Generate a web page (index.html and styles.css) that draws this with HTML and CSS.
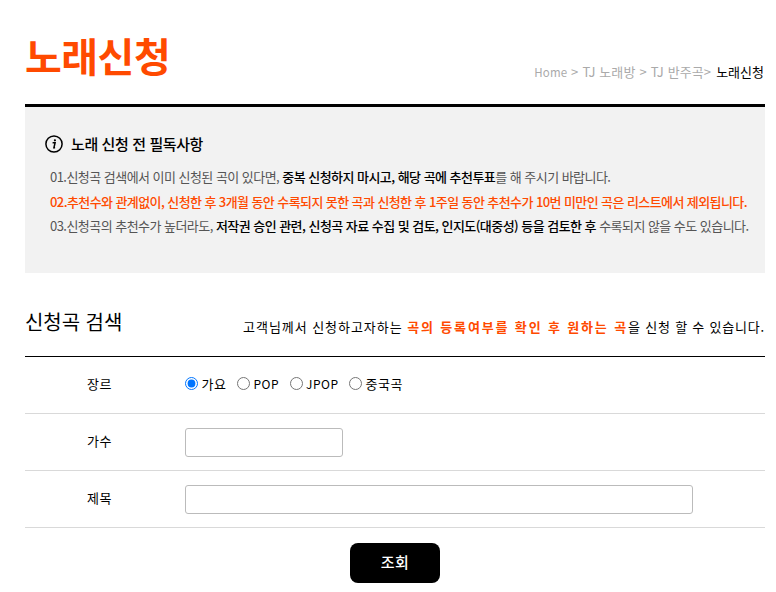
FILE: index.html
```html
<!DOCTYPE html>
<html lang="ko">
<head>
<meta charset="utf-8">
<title>노래신청</title>
<link rel="stylesheet" href="styles.css">
</head>
<body>
<main class="page">
  <header class="head">
    <h1 class="title">노래신청</h1>
    <nav class="crumbs"><span class="home">Home</span><i>&gt;</i><span>TJ 노래방</span><i>&gt;</i><span>TJ 반주곡</span><i class="tight">&gt;</i><b>노래신청</b></nav>
  </header>
  <section class="notice">
    <h2 class="notice-title">
      <svg class="info" width="18" height="18" viewBox="0 0 18 18"><circle cx="9" cy="9" r="8.1" fill="none" stroke="#000" stroke-width="1.5"/><circle cx="9.9" cy="5.3" r="1.1"/><path d="M7.6 7.7h2.5l-1.2 5h1.2" fill="none" stroke="#000" stroke-width="1.5"/></svg>
      노래 신청 전 필독사항
    </h2>
    <p>01.신청곡 검색에서 이미 신청된 곡이 있다면, <strong>중복 신청하지 마시고, 해당 곡에 추천투표</strong>를 해 주시기 바랍니다.</p>
    <p class="warn">02.추천수와 관계없이, 신청한 후 3개월 동안 수록되지 못한 곡과 신청한 후 1주일 동안 추천수가 10번 미만인 곡은 리스트에서 제외됩니다.</p>
    <p>03.신청곡의 추천수가 높더라도, <strong>저작권 승인 관련, 신청곡 자료 수집 및 검토, 인지도(대중성) 등을 검토한 후</strong> 수록되지 않을 수도 있습니다.</p>
  </section>
  <div class="search-head">
    <h2 class="search-title">신청곡 검색</h2>
    <p class="search-desc"><span class="lead">고객님께서 신청하고자하는 </span><em>곡의 등록여부를 확인 후 원하는 곡</em>을 신청 할 수 있습니다.</p>
  </div>
  <form class="form">
    <div class="row">
      <span class="label">장르</span>
      <div class="radios">
        <label><input type="radio" name="g" checked>가요</label>
        <label class="latin"><input type="radio" name="g">POP</label>
        <label class="latin"><input type="radio" name="g">JPOP</label>
        <label><input type="radio" name="g">중국곡</label>
      </div>
    </div>
    <div class="row">
      <span class="label">가수</span>
      <input class="field short" type="text">
    </div>
    <div class="row">
      <span class="label">제목</span>
      <input class="field long" type="text">
    </div>
    <div class="actions"><button class="btn" type="button">조회</button></div>
  </form>
</main>
</body>
</html>
```
FILE: styles.css
```css
* { box-sizing: border-box; }
html, body { margin: 0; padding: 0; background: #fff; }
body { font-family: "Noto Sans CJK KR", "Noto Sans", sans-serif; color: #000; overflow: hidden; }
.page { width: 740px; margin-left: 25px; height: 592px; }
.head { height: 104px; display: flex; justify-content: space-between; align-items: flex-start; }
.title { margin: 25px 0 0; font-size: 40px; line-height: 60px; font-weight: 700; color: #ff4a00; letter-spacing: -0.5px; }
.crumbs { margin: 63px 1px 0 0; display: flex; align-items: center; font-size: 13px; line-height: 18px; letter-spacing: 0.1px; color: #aaa; white-space: nowrap; }
.crumbs .home { font-size: 11.5px; }
.crumbs i { font-style: normal; margin: 0 4px; }
.crumbs i.tight { margin: 0 5px 0 0; }
.crumbs b { font-weight: 400; color: #000; letter-spacing: 0; }
.notice { height: 169px; border-top: 3px solid #000; background: #f2f2f2; padding: 26px 0 0 20px; }
.notice-title { margin: 0 0 10px; display: flex; align-items: center; gap: 8px; font-size: 15px; line-height: 22px; font-weight: 500; letter-spacing: -0.4px; }
.info { flex: none; }
.notice p { margin: 0 0 0 5px; font-size: 13px; line-height: 24.5px; color: #555; white-space: nowrap; letter-spacing: -0.54px; }
.notice strong { font-weight: 500; color: #000; }
.notice .warn { color: #ff4a00; font-weight: 500; letter-spacing: -0.59px; }
.search-head { height: 84px; border-bottom: 1px solid #000; display: flex; justify-content: space-between; align-items: flex-start; }
.search-title { margin: 35px 0 0; font-size: 20px; line-height: 27px; font-weight: 400; color: #000; letter-spacing: -0.05px; }
.search-desc { margin: 45px 0 0; font-size: 13px; line-height: 18px; white-space: nowrap; letter-spacing: 0.8px; }
.search-desc .lead { letter-spacing: 0.95px; }
.search-desc em { font-style: normal; font-weight: 700; color: #ff4a00; letter-spacing: 1.85px; }
.row { height: 57px; border-bottom: 1px solid #d9d9d9; display: flex; align-items: center; }
.label { width: 160px; padding-left: 62px; margin-top: -3px; font-size: 13px; letter-spacing: 0.5px; }
.radios { display: flex; gap: 10.5px; font-size: 13px; letter-spacing: 0.5px; margin-top: -3px; }
.radios label { display: flex; align-items: center; gap: 3.5px; }
.radios .latin { font-size: 12px; }
.radios input { margin: 0; width: 13px; height: 13px; }
.field { height: 29px; border: 1px solid #bbb; border-radius: 3px; background: #fff; padding: 0 6px; }
.short { width: 158px; }
.long { width: 508px; }
.actions { display: flex; justify-content: center; padding-top: 15px; }
.btn { width: 90px; height: 40px; border: 0; border-radius: 8px; background: #000; color: #fff; padding: 0 0 3px; letter-spacing: 0.5px; font: 500 15px "Noto Sans CJK KR", sans-serif; }
```
